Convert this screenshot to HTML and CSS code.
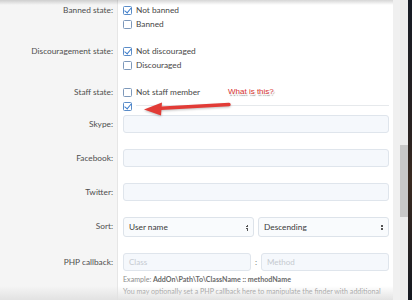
FILE: index.html
```html
<!DOCTYPE html>
<html lang="en">

<head>
  <meta charset="UTF-8">
  <title>User search criteria</title>
  <link rel="stylesheet" href="styles.css">
</head>

<body>
  <div class="window">
    <div class="pane">
      <div class="form">
        <div class="row row-first">
          <div class="label">Banned state:</div>
          <div class="field">
            <label class="check"><span class="box checked"></span>Not banned</label>
            <label class="check"><span class="box"></span>Banned</label>
          </div>
        </div>
        <div class="row">
          <div class="label">Discouragement state:</div>
          <div class="field">
            <label class="check"><span class="box checked"></span>Not discouraged</label>
            <label class="check"><span class="box"></span>Discouraged</label>
          </div>
        </div>
        <div class="row row-staff">
          <div class="label">Staff state:</div>
          <div class="field">
            <label class="check"><span class="box"></span>Not staff member</label>
            <div class="check check-line"><span class="box checked"></span><span class="rule"></span></div>
          </div>
        </div>
        <div class="row row-input row-skype">
          <div class="label">Skype:</div>
          <div class="field"><div class="input"></div></div>
        </div>
        <div class="row row-input">
          <div class="label">Facebook:</div>
          <div class="field"><div class="input"></div></div>
        </div>
        <div class="row row-input">
          <div class="label">Twitter:</div>
          <div class="field"><div class="input"></div></div>
        </div>
        <div class="row row-input">
          <div class="label">Sort:</div>
          <div class="field pair">
            <div class="select">User name<span class="caret"></span></div>
            <div class="select">Descending<span class="caret"></span></div>
          </div>
        </div>
        <div class="row row-input">
          <div class="label">PHP callback:</div>
          <div class="field">
            <div class="pair callback">
              <div class="input placeholder">Class</div>
              <span class="sep">:</span>
              <div class="input placeholder">Method</div>
            </div>
            <div class="explain">Example: <b>AddOn\Path\To\ClassName :: methodName</b></div>
            <div class="explain">You may optionally set a PHP callback here to manipulate the finder with additional
              criteria.</div>
          </div>
        </div>
      </div>

      <div class="note">What is this?</div>
      <svg class="arrow" width="90" height="16" viewBox="0 0 90 16">
        <path d="M86 3.5 L18 7.2" stroke="#e23b36" stroke-width="3.4" stroke-linecap="round" fill="none" />
        <path d="M1 8.6 L19 1.4 L18 14.6 Z" fill="#e23b36" />
      </svg>
      <div class="shade-top"></div>
      <div class="shade-bottom"></div>
    </div>
    <div class="gutter"></div>
    <div class="scrollbar">
      <div class="thumb"></div>
    </div>
    <div class="edge"></div>
  </div>
</body>

</html>
```

FILE: styles.css
```css
* {
  margin: 0;
  padding: 0;
  box-sizing: border-box;
}

body {
  font-family: 'Lato', 'Open Sans', sans-serif;
  font-size: 8.3px;
  color: #4c4c4c;
  background: #fff;
  overflow: hidden;
}

.window {
  display: flex;
  height: 300px;
  width: 412px;
}

.pane {
  position: relative;
  width: 393px;
  height: 300px;
  overflow: hidden;
  background: linear-gradient(to right, #f5f5f5 117px, #e6e6e6 117px 118px, #fff 118px);
}

.row {
  display: grid;
  grid-template-columns: 118px 1fr;
  padding: 6px 0 7px;
}

.row-first {
  padding-top: 3px;
}

.row-staff {
  padding-bottom: 0;
}

.row-input {
  padding: 8px 0;
}

.row-skype {
  padding-top: 2px;
}

.label {
  text-align: right;
  padding-right: 5px;
  line-height: 14px;
  color: #4e4e4e;
}

.row-input .label {
  line-height: 18px;
}

.field {
  padding: 0 4px 0 5px;
}

.check {
  display: flex;
  align-items: center;
  gap: 4px;
  height: 14px;
  color: #474747;
}

.box {
  width: 9px;
  height: 9px;
  border: 1px solid #7d98ba;
  border-radius: 1.5px;
  background: #fff;
  position: relative;
  flex: none;
}

.box.checked {
  border-color: #5a8cc8;
}

.box.checked::after {
  content: '';
  position: absolute;
  left: 2px;
  top: -1px;
  width: 3px;
  height: 6px;
  border: solid #3a7ccc;
  border-width: 0 1.6px 1.6px 0;
  transform: rotate(40deg);
}

.rule {
  flex: 1;
  height: 1px;
  background: #e6e9ec;
  margin-top: -1px;
}

.input {
  height: 18px;
  background: #f5f8fc;
  border: 1px solid #dfe5ec;
  border-radius: 3px;
}

.placeholder {
  color: #c5cad0;
  padding-left: 5px;
  line-height: 16px;
  font-size: 8px;
}

.pair {
  display: flex;
  gap: 4px;
}

.select {
  flex: 1;
  height: 20px;
  display: flex;
  align-items: center;
  justify-content: space-between;
  padding: 0 5px;
  background: #f9fbfd;
  border: 1px solid #dde3ea;
  border-radius: 3px;
  color: #3a3a3a;
}

.caret {
  width: 3px;
  height: 7px;
  background:
    linear-gradient(to bottom right, transparent 50%, #555 50%) 0 0 / 3px 3px no-repeat,
    linear-gradient(to top right, transparent 50%, #555 50%) 0 4px / 3px 3px no-repeat;
}

.callback {
  gap: 0;
  align-items: center;
}

.callback .input {
  flex: 1;
}

.sep {
  width: 10px;
  text-align: center;
  color: #777;
}

.explain {
  font-size: 7.1px;
  color: #8c8c8c;
  line-height: 12px;
  margin-top: 3px;
}

.explain b {
  color: #6a6a6a;
}

.explain + .explain {
  margin-top: 0;
}

.note {
  position: absolute;
  left: 228px;
  top: 87px;
  font-family: 'Liberation Sans', sans-serif;
  font-size: 8px;
  color: #d8322e;
  text-shadow: 1px 1px 0 #fff, -1px -1px 0 #fff, 1px -1px 0 #fff, -1px 1px 0 #fff, 1px 2px 1px rgba(0, 0, 0, 0.45);
}

.arrow {
  position: absolute;
  left: 143px;
  top: 101px;
  filter: drop-shadow(0 1px 1px rgba(0, 0, 0, 0.25));
}

.shade-top {
  position: absolute;
  left: 0;
  right: 0;
  top: 0;
  height: 5px;
  background: linear-gradient(rgba(0, 0, 0, 0.16), rgba(0, 0, 0, 0));
}

.shade-bottom {
  position: absolute;
  left: 0;
  right: 0;
  bottom: 0;
  height: 14px;
  background: linear-gradient(rgba(235, 235, 235, 0), rgba(225, 225, 225, 0.95));
}

.gutter {
  width: 7px;
  background: #f0f0f0;
}

.scrollbar {
  width: 8px;
  background: #ececec;
  padding-top: 145px;
}

.thumb {
  height: 72px;
  background: #c8c8c8;
}

.edge {
  width: 4px;
  background: linear-gradient(#151a24, #2a2220 45%, #3a2a20 60%, #141820);
}
```
